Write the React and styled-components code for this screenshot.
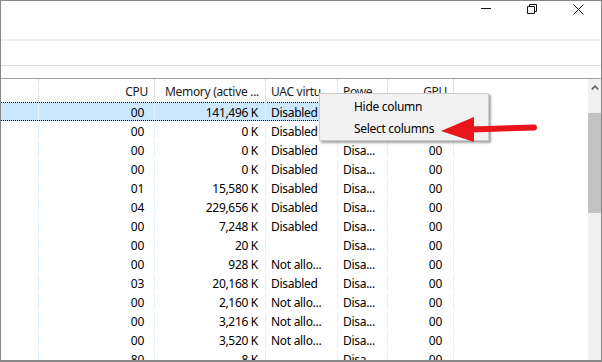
import React from 'react';
import styled, { createGlobalStyle } from 'styled-components';

const GlobalStyle = createGlobalStyle`
  html, body {
    margin: 0;
    padding: 0;
    background: #ffffff;
  }
  body {
    font-family: "Noto Sans", "Open Sans", sans-serif;
    font-size: 12px;
    letter-spacing: -0.3px;
  }
`;

const Window = styled.div`
  position: relative;
  width: 602px;
  height: 362px;
  box-sizing: border-box;
  border: 1px solid #888888;
  border-bottom-width: 2px;
  background: #ffffff;
  display: flex;
  flex-direction: column;
  overflow: hidden;
`;

const TitleBar = styled.div`
  height: 38px;
  display: flex;
  justify-content: flex-end;
  align-items: flex-start;
  flex-shrink: 0;
`;

const ControlButton = styled.div`
  width: 46px;
  height: 14px;
  padding-top: 3px;
  display: flex;
  align-items: flex-start;
  justify-content: center;
  color: #111111;
`;

const Band = styled.div`
  height: 2px;
  background: #f0f0f0;
  flex-shrink: 0;
`;

const TabStrip = styled.div`
  height: 24px;
  flex-shrink: 0;
`;

const Divider = styled.div`
  height: 1px;
  background: ${p => p.$tone};
  flex-shrink: 0;
`;

const Toolbar = styled.div`
  height: 12px;
  flex-shrink: 0;
`;

const Content = styled.div`
  flex: 1;
  display: flex;
  min-height: 0;
`;

const Table = styled.div`
  flex: 1;
  overflow: hidden;
`;

const COLS = '38px 116px 111px 72px 50px 66px';

const HeaderRow = styled.div`
  display: grid;
  grid-template-columns: ${COLS};
  width: 453px;
  height: 24px;
`;

const HeaderCell = styled.div`
  border-right: 1px dotted #cfcfcf;
  display: flex;
  align-items: center;
  justify-content: ${p => (p.$right ? 'flex-end' : 'flex-start')};
  padding: ${p => (p.$right ? `1px ${p.$inset}px 0 0` : `1px 0 0 ${p.$inset}px`)};
  color: #1b1b1b;
  white-space: nowrap;
  overflow: hidden;
`;

const Row = styled.div`
  display: grid;
  grid-template-columns: ${COLS};
  width: 453px;
  height: 19px;
  box-sizing: border-box;
  background: ${p => (p.$selected ? '#cce8ff' : 'transparent')};
  border-top: 1px dotted ${p => (p.$selected ? '#000000' : 'transparent')};
  border-bottom: 1px dotted ${p => (p.$selected ? '#000000' : 'transparent')};
  margin-top: ${p => (p.$selected ? '-1px' : '0')};
`;

const Cell = styled.div`
  border-right: 1px solid #e3f1fd;
  display: flex;
  align-items: center;
  justify-content: ${p => (p.$right ? 'flex-end' : 'flex-start')};
  padding: ${p => (p.$right ? `2px ${p.$inset}px 0 0` : `2px 0 0 ${p.$inset}px`)};
  color: #000000;
  white-space: nowrap;
  overflow: hidden;
`;

const Scrollbar = styled.div`
  width: 13px;
  background: #f0f0f0;
  display: flex;
  flex-direction: column;
  flex-shrink: 0;
`;

const ScrollButton = styled.div`
  height: 17px;
  display: flex;
  align-items: center;
  justify-content: center;
  color: #606060;
`;

const ScrollThumb = styled.div`
  margin-top: 17px;
  height: 100px;
  background: #c2c2c2;
`;

const ContextMenu = styled.div`
  position: absolute;
  left: 318px;
  top: 92px;
  width: 170px;
  box-sizing: border-box;
  padding: 1px 0;
  background: #f2f2f2;
  border: 1px solid #cccccc;
  box-shadow: 2px 2px 2px rgba(0, 0, 0, 0.35);
`;

const MenuItem = styled.div`
  height: 22px;
  display: flex;
  align-items: center;
  padding-left: 34px;
  color: #000000;
`;

const Pointer = styled.svg`
  position: absolute;
  left: 429px;
  top: 109px;
`;

const columns = [
  { right: false, inset: 4, head: 4, title: '' },
  { right: true, inset: 10, head: 6, title: 'CPU' },
  { right: true, inset: 7, head: 6, title: 'Memory (active ...' },
  { right: false, inset: 5, head: 5, title: 'UAC virtu...' },
  { right: false, inset: 5, head: 5, title: 'Powe...' },
  { right: true, inset: 11, head: 6, title: 'GPU' },
];

const rows = [
  ['00', '141,496 K', 'Disabled', 'Disa...', '00'],
  ['00', '0 K', 'Disabled', 'Disa...', '00'],
  ['00', '0 K', 'Disabled', 'Disa...', '00'],
  ['00', '0 K', 'Disabled', 'Disa...', '00'],
  ['01', '15,580 K', 'Disabled', 'Disa...', '00'],
  ['04', '229,656 K', 'Disabled', 'Disa...', '00'],
  ['00', '7,248 K', 'Disabled', 'Disa...', '00'],
  ['00', '20 K', '', 'Disa...', '00'],
  ['00', '928 K', 'Not allo...', 'Disa...', '00'],
  ['03', '20,168 K', 'Disabled', 'Disa...', '00'],
  ['00', '2,160 K', 'Not allo...', 'Disa...', '00'],
  ['00', '3,216 K', 'Not allo...', 'Disa...', '00'],
  ['00', '3,520 K', 'Not allo...', 'Disa...', '00'],
  ['80', '8 K', '', 'Disa...', '00'],
];

const App = () => (
  <>
    <GlobalStyle />
    <Window>
      <TitleBar>
        <ControlButton>
          <svg width="10" height="10" viewBox="0 0 10 10">
            <path d="M0 4.5H10" stroke="currentColor" strokeWidth="1" />
          </svg>
        </ControlButton>
        <ControlButton>
          <svg width="10" height="10" viewBox="0 0 10 10" fill="none">
            <path d="M0.5 2.5H7.5V9.5H0.5Z" stroke="currentColor" />
            <path d="M2.5 2.5V0.5H9.5V7.5H7.5" stroke="currentColor" />
          </svg>
        </ControlButton>
        <ControlButton>
          <svg width="11" height="11" viewBox="0 0 11 11">
            <path d="M0.5 0.5L10.5 10.5M10.5 0.5L0.5 10.5" stroke="currentColor" strokeWidth="1" />
          </svg>
        </ControlButton>
      </TitleBar>
      <Band />
      <TabStrip />
      <Divider $tone="#d9d9d9" />
      <Toolbar />
      <Divider $tone="#a0a0a0" />
      <Content>
        <Table>
          <HeaderRow>
            {columns.map((c, i) => (
              <HeaderCell key={i} $right={c.right} $inset={c.head}>
                {c.title}
              </HeaderCell>
            ))}
          </HeaderRow>
          {rows.map((r, i) => (
            <Row key={i} $selected={i === 0}>
              <Cell $inset={4} />
              {r.map((v, j) => (
                <Cell key={j} $right={columns[j + 1].right} $inset={columns[j + 1].inset}>
                  {v}
                </Cell>
              ))}
            </Row>
          ))}
        </Table>
        <Scrollbar>
          <ScrollButton>
            <svg width="8" height="5" viewBox="0 0 8 5" fill="none">
              <path d="M0.8 4.4L4 1.2L7.2 4.4" stroke="currentColor" strokeWidth="1.6" />
            </svg>
          </ScrollButton>
          <ScrollThumb />
        </Scrollbar>
      </Content>
      <ContextMenu>
        <MenuItem>Hide column</MenuItem>
        <MenuItem>Select columns</MenuItem>
      </ContextMenu>
      <Pointer width="112" height="38" viewBox="0 0 112 38">
        <path d="M40 19.5L104 17.5" stroke="#e8161c" strokeWidth="6" strokeLinecap="round" />
        <path d="M11 21L44 7L44 32Z" fill="#e8161c" />
      </Pointer>
    </Window>
  </>
);

export default App;
